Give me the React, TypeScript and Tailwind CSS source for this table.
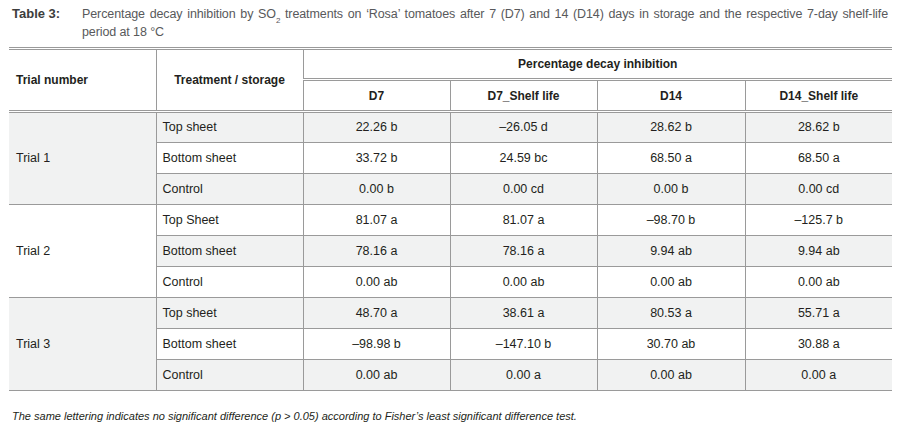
const rows = [
  { trial: 'Trial 1', items: [
    ['Top sheet', '22.26 b', '–26.05 d', '28.62 b', '28.62 b'],
    ['Bottom sheet', '33.72 b', '24.59 bc', '68.50 a', '68.50 a'],
    ['Control', '0.00 b', '0.00 cd', '0.00 b', '0.00 cd'],
  ] },
  { trial: 'Trial 2', items: [
    ['Top Sheet', '81.07 a', '81.07 a', '–98.70 b', '–125.7 b'],
    ['Bottom sheet', '78.16 a', '78.16 a', '9.94 ab', '9.94 ab'],
    ['Control', '0.00 ab', '0.00 ab', '0.00 ab', '0.00 ab'],
  ] },
  { trial: 'Trial 3', items: [
    ['Top sheet', '48.70 a', '38.61 a', '80.53 a', '55.71 a'],
    ['Bottom sheet', '–98.98 b', '–147.10 b', '30.70 ab', '30.88 a'],
    ['Control', '0.00 ab', '0.00 a', '0.00 ab', '0.00 a'],
  ] },
]

const font = "font-['Liberation_Sans','Arial',sans-serif]"

export default function App() {
  return (
    <div className={`w-[904px] h-[431px] bg-white text-[#231f20] ${font}`}>
      <div className="flex pl-3 pt-[5px] text-[13px] leading-[18px]">
        <div className="w-[70px] shrink-0 font-bold text-[#3d3d3d]">Table 3:</div>
        <div className="w-[806px] text-[12.5px] tracking-[-0.1px] text-[#58595b]">
          <div className="whitespace-nowrap text-justify [text-align-last:justify]">
            Percentage decay inhibition by SO<sub className="text-[8px] leading-none align-[-3px]">2</sub> treatments on ‘Rosa’ tomatoes after 7 (D7) and 14 (D14) days in storage and the respective 7-day shelf-life
          </div>
          <div>period at 18 °C</div>
        </div>
      </div>

      <table className="ml-[9px] mt-[6px] w-[883px] table-fixed border-collapse text-[12.5px]">
        <colgroup>
          <col className="w-[147px]" />
          <col className="w-[147px]" />
          <col className="w-[147px]" />
          <col className="w-[147px]" />
          <col className="w-[148px]" />
          <col className="w-[147px]" />
        </colgroup>
        <thead className="font-bold text-[12px]">
          <tr className="border-t-[3px] border-double border-[#9a9a9a]">
            <th rowSpan={2} className="border-b-[3px] border-double border-[#9a9a9a] pl-[7px] text-left">Trial number</th>
            <th rowSpan={2} className="border-x border-b-[3px] border-[#9a9a9a] [border-bottom-style:double] text-center">Treatment / storage</th>
            <th colSpan={4} className="h-[31px] border-b-[3px] border-double border-[#9a9a9a] text-center">Percentage decay inhibition</th>
          </tr>
          <tr>
            <th className="h-[32px] border-r border-b-[3px] border-[#9a9a9a] [border-bottom-style:double] text-center">D7</th>
            <th className="border-r border-b-[3px] border-[#9a9a9a] [border-bottom-style:double] text-center">D7_Shelf life</th>
            <th className="border-r border-b-[3px] border-[#9a9a9a] [border-bottom-style:double] text-center">D14</th>
            <th className="border-b-[3px] border-[#9a9a9a] [border-bottom-style:double] text-center">D14_Shelf life</th>
          </tr>
        </thead>
        <tbody>
          {rows.map((g, gi) =>
            g.items.map((r, ri) => {
              const idx = gi * 3 + ri
              const shade = idx % 2 === 0 ? 'bg-[#f1f2f2]' : 'bg-white'
              return (
                <tr key={idx} className={`border-b border-[#9a9a9a] ${shade}`}>
                  {ri === 0 && (
                    <td rowSpan={3} className={`pl-[7px] ${gi % 2 === 0 ? 'bg-[#f1f2f2]' : 'bg-white'}`}>{g.trial}</td>
                  )}
                  <td className="h-[31px] border-x border-[#9a9a9a] pl-[6px]">{r[0]}</td>
                  <td className="border-r border-[#9a9a9a] text-center">{r[1]}</td>
                  <td className="border-r border-[#9a9a9a] text-center">{r[2]}</td>
                  <td className="border-r border-[#9a9a9a] text-center">{r[3]}</td>
                  <td className="text-center">{r[4]}</td>
                </tr>
              )
            })
          )}
        </tbody>
      </table>

      <p className="pl-3 pt-[17px] text-[11px] italic">
        The same lettering indicates no significant difference (p &gt; 0.05) according to Fisher’s least significant difference test.
      </p>
    </div>
  )
}
